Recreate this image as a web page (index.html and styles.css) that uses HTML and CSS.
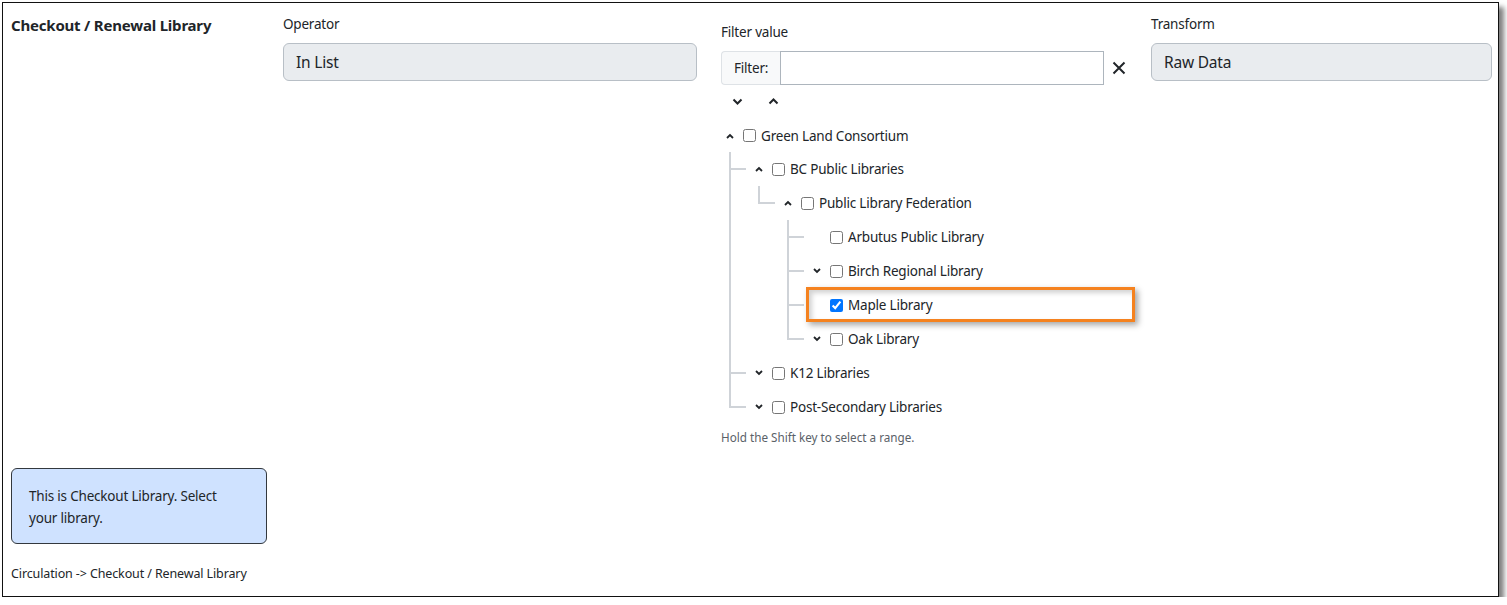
FILE: index.html
```html
<!DOCTYPE html>
<html lang="en">
<head>
<meta charset="utf-8">
<title>Checkout / Renewal Library</title>
<link rel="stylesheet" href="styles.css">
</head>
<body>
<div class="frame">
  <div class="grid">
    <section class="col col-name">
      <h2 class="title">Checkout / Renewal Library</h2>
      <div class="note">This is Checkout Library. Select your library.</div>
      <div class="path">Circulation -&gt; Checkout / Renewal Library</div>
    </section>

    <section class="col col-op">
      <div class="label">Operator</div>
      <div class="readonly">In List</div>
    </section>

    <section class="col col-filter">
      <div class="label label-filter">Filter value</div>
      <div class="filter-row">
        <div class="input-group">
          <span class="addon">Filter:</span>
          <input class="filter-input" type="text" aria-label="Filter">
        </div>
        <button class="clear" aria-label="Clear">
          <svg width="14" height="14" viewBox="0 0 14 14"><path d="M1.5 1.5 L12.5 12.5 M12.5 1.5 L1.5 12.5" stroke="#212529" stroke-width="2" fill="none"/></svg>
        </button>
      </div>
      <div class="expand-row">
        <button class="chev" aria-label="Expand all"><svg width="11" height="7" viewBox="0 0 11 7"><polyline points="1.5,1.5 5.5,5.5 9.5,1.5" fill="none" stroke="#212529" stroke-width="2"/></svg></button>
        <button class="chev" aria-label="Collapse all"><svg width="11" height="7" viewBox="0 0 11 7"><polyline points="1.5,5.5 5.5,1.5 9.5,5.5" fill="none" stroke="#212529" stroke-width="2"/></svg></button>
      </div>

      <div class="tree">
        <ul class="tree-root">
          <li>
            <div class="node node-first"><span class="tog"><svg width="8" height="6" viewBox="0 0 8 6"><polyline points="1,5 4,2 7,5" fill="none" stroke="#212529" stroke-width="1.8"/></svg></span><input type="checkbox"><span class="name">Green Land Consortium</span></div>
            <ul class="children">
              <li>
                <div class="node"><span class="tog"><svg width="8" height="6" viewBox="0 0 8 6"><polyline points="1,5 4,2 7,5" fill="none" stroke="#212529" stroke-width="1.8"/></svg></span><input type="checkbox"><span class="name">BC Public Libraries</span></div>
                <ul class="children">
                  <li>
                    <div class="node"><span class="tog"><svg width="8" height="6" viewBox="0 0 8 6"><polyline points="1,5 4,2 7,5" fill="none" stroke="#212529" stroke-width="1.8"/></svg></span><input type="checkbox"><span class="name">Public Library Federation</span></div>
                    <ul class="children">
                      <li>
                        <div class="node"><span class="tog"></span><input type="checkbox"><span class="name">Arbutus Public Library</span></div>
                      </li>
                      <li>
                        <div class="node"><span class="tog"><svg width="8" height="6" viewBox="0 0 8 6"><polyline points="1,1 4,4 7,1" fill="none" stroke="#212529" stroke-width="1.8"/></svg></span><input type="checkbox"><span class="name">Birch Regional Library</span></div>
                      </li>
                      <li>
                        <div class="node"><span class="tog"></span><input type="checkbox" checked><span class="name">Maple Library</span></div>
                      </li>
                      <li>
                        <div class="node"><span class="tog"><svg width="8" height="6" viewBox="0 0 8 6"><polyline points="1,1 4,4 7,1" fill="none" stroke="#212529" stroke-width="1.8"/></svg></span><input type="checkbox"><span class="name">Oak Library</span></div>
                      </li>
                    </ul>
                  </li>
                </ul>
              </li>
              <li>
                <div class="node"><span class="tog"><svg width="8" height="6" viewBox="0 0 8 6"><polyline points="1,1 4,4 7,1" fill="none" stroke="#212529" stroke-width="1.8"/></svg></span><input type="checkbox"><span class="name">K12 Libraries</span></div>
              </li>
              <li>
                <div class="node"><span class="tog"><svg width="8" height="6" viewBox="0 0 8 6"><polyline points="1,1 4,4 7,1" fill="none" stroke="#212529" stroke-width="1.8"/></svg></span><input type="checkbox"><span class="name">Post-Secondary Libraries</span></div>
              </li>
            </ul>
          </li>
        </ul>
        <div class="annot"></div>
      </div>
      <div class="hint">Hold the Shift key to select a range.</div>
    </section>

    <section class="col col-transform">
      <div class="label">Transform</div>
      <div class="readonly">Raw Data</div>
    </section>
  </div>
</div>
</body>
</html>
```

FILE: styles.css
```css
html, body {
  margin: 0;
  padding: 0;
  background: #ffffff;
  overflow: hidden;
}

body {
  font-family: "Noto Sans", "Open Sans", sans-serif;
  font-size: 13.5px;
  letter-spacing: -0.2px;
  color: #212529;
}

.frame {
  margin: 2px 0 0 2px;
  width: 1497px;
  height: 595px;
  box-sizing: border-box;
  border: 1px solid #111;
  background: #fff;
  box-shadow: 5px 5px 5px rgba(0, 0, 0, 0.5);
}

.grid {
  display: grid;
  grid-template-columns: 272px 438px 430px 341px;
  height: 100%;
  box-sizing: border-box;
  padding: 11px 0 13px 8px;
}

.col {
  min-width: 0;
}

.col-name {
  display: flex;
  flex-direction: column;
  padding-right: 16px;
}

.title {
  margin: 0;
  font-size: 15px;
  font-weight: 700;
  line-height: 22px;
  letter-spacing: -0.2px;
}

.note {
  margin-top: auto;
  background: #cfe2ff;
  border: 1px solid #33383e;
  border-radius: 6px;
  padding: 16px 20px 14px 17px;
  line-height: 22px;
  font-size: 13.5px;
}

.path {
  margin-top: 21px;
  font-size: 12.5px;
  line-height: 18px;
  letter-spacing: -0.12px;
}

.col-op {
  padding-right: 24px;
}

.label {
  font-size: 13.5px;
  line-height: 20px;
  margin-bottom: 9px;
}

.readonly {
  height: 38px;
  box-sizing: border-box;
  border: 1px solid #b8bfc6;
  border-radius: 6px;
  background: #e9ecef;
  padding: 0 12px;
  font-size: 15.5px;
  display: flex;
  align-items: center;
}

.label-filter {
  margin-top: 8px;
}

.filter-row {
  display: flex;
  align-items: center;
}

.input-group {
  display: flex;
  width: 383px;
  height: 34px;
}

.addon {
  width: 59px;
  box-sizing: border-box;
  display: flex;
  align-items: center;
  padding-left: 12px;
  background: #f8f9fa;
  border: 1px solid #dee2e6;
  border-right: none;
  border-radius: 4px 0 0 4px;
  font-size: 13.5px;
}

.filter-input {
  flex: 1;
  min-width: 0;
  margin: 0;
  border: 1px solid #adb5bd;
  border-radius: 0;
  padding: 0 8px;
  font: inherit;
  outline: none;
}

.clear {
  margin-left: 8px;
  padding: 0;
  border: none;
  background: none;
  width: 14px;
  height: 14px;
  display: flex;
}

.expand-row {
  display: flex;
  align-items: center;
  height: 16px;
  margin-top: 8px;
  padding-left: 11px;
  gap: 25px;
}

.chev {
  padding: 0;
  border: none;
  background: none;
  display: flex;
}

.tree {
  position: relative;
  margin-top: 10px;
}

.tree ul {
  list-style: none;
  margin: 0;
  padding: 0;
}

.tree-root > li {
  padding-left: 5px;
}

.children {
  margin-left: 3px !important;
}

.children > li {
  position: relative;
  padding-left: 26px;
}

.children > li::before {
  content: "";
  position: absolute;
  left: 0;
  top: 0;
  bottom: 0;
  width: 2px;
  background: #cfd3d8;
}

.children > li:last-child::before {
  bottom: auto;
  height: 18px;
}

.children > li::after {
  content: "";
  position: absolute;
  left: 2px;
  top: 16px;
  width: 15px;
  height: 2px;
  background: #cfd3d8;
}

.node {
  display: flex;
  align-items: center;
  height: 34px;
}

.node-first {
  height: 33px;
}

.tog {
  width: 8px;
  margin-right: 9px;
  display: flex;
  align-items: center;
}

.node input[type="checkbox"] {
  width: 13px;
  height: 13px;
  margin: 0 5px 0 0;
}

.name {
  font-size: 13.5px;
  white-space: nowrap;
}

.annot {
  position: absolute;
  left: 85px;
  top: 168px;
  width: 329px;
  height: 35px;
  box-sizing: border-box;
  border: 3px solid #f5821f;
  box-shadow: 3px 3px 6px rgba(0, 0, 0, 0.35), inset 3px 3px 5px rgba(0, 0, 0, 0.18);
  pointer-events: none;
}

.hint {
  margin-top: 4px;
  font-size: 11.7px;
  line-height: 18px;
  letter-spacing: 0;
  color: #5a6168;
}
```
